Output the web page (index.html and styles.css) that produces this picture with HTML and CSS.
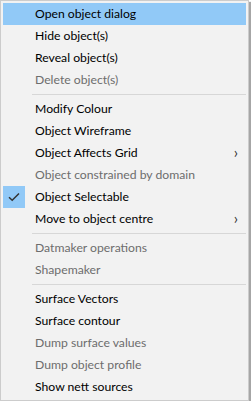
FILE: index.html
```html
<!DOCTYPE html>
<html lang="en">
<head>
    <meta charset="UTF-8">
    <title>Context menu</title>
    <link rel="stylesheet" href="styles.css">
</head>
<body>
    <div class="menu">
        <div class="item active">Open object dialog</div>
        <div class="item">Hide object(s)</div>
        <div class="item">Reveal object(s)</div>
        <div class="item disabled">Delete object(s)</div>
        <div class="sep"></div>
        <div class="item">Modify Colour</div>
        <div class="item">Object Wireframe</div>
        <div class="item">Object Affects Grid<span class="arrow">&#8250;</span></div>
        <div class="item disabled">Object constrained by domain</div>
        <div class="item">
            <span class="check">
                <svg width="12" height="10" viewBox="0 0 12 10"><path d="M1 5.2 L4.2 8.2 L11 1.5" fill="none" stroke="#333" stroke-width="1.5"/></svg>
            </span>Object Selectable
        </div>
        <div class="item">Move to object centre<span class="arrow">&#8250;</span></div>
        <div class="sep"></div>
        <div class="item disabled">Datmaker operations</div>
        <div class="item disabled">Shapemaker</div>
        <div class="sep"></div>
        <div class="item">Surface Vectors</div>
        <div class="item">Surface contour</div>
        <div class="item disabled">Dump surface values</div>
        <div class="item disabled">Dump object profile</div>
        <div class="item">Show nett sources</div>
    </div>
</body>
</html>
```

FILE: styles.css
```css
body {
    margin: 0;
    background-color: #ffffff;
    font-family: 'Lato', sans-serif;
    font-size: 12.2px;
}
.menu {
    width: 247px;
    border: 1px solid #cccccc;
    background-color: #f2f2f2;
    padding: 2px 0;
    box-shadow: 2px 2px 1px rgba(0, 0, 0, 0.35);
}
.item {
    position: relative;
    height: 22px;
    line-height: 22px;
    margin: 0 2px;
    padding-left: 32px;
    color: #000000;
    white-space: nowrap;
}
.item.active {
    background-color: #91c9f7;
}
.item.disabled {
    color: #6d6d6d;
}
.arrow {
    position: absolute;
    right: 8px;
    top: -1px;
    font-size: 15px;
    color: #333333;
}
.check {
    position: absolute;
    left: 0;
    top: 0;
    width: 22px;
    height: 22px;
    background-color: #91c9f7;
    display: flex;
    align-items: center;
    justify-content: center;
}
.sep {
    height: 1px;
    background-color: #d7d7d7;
    margin: 3px 2px 3px 31px;
}
```
